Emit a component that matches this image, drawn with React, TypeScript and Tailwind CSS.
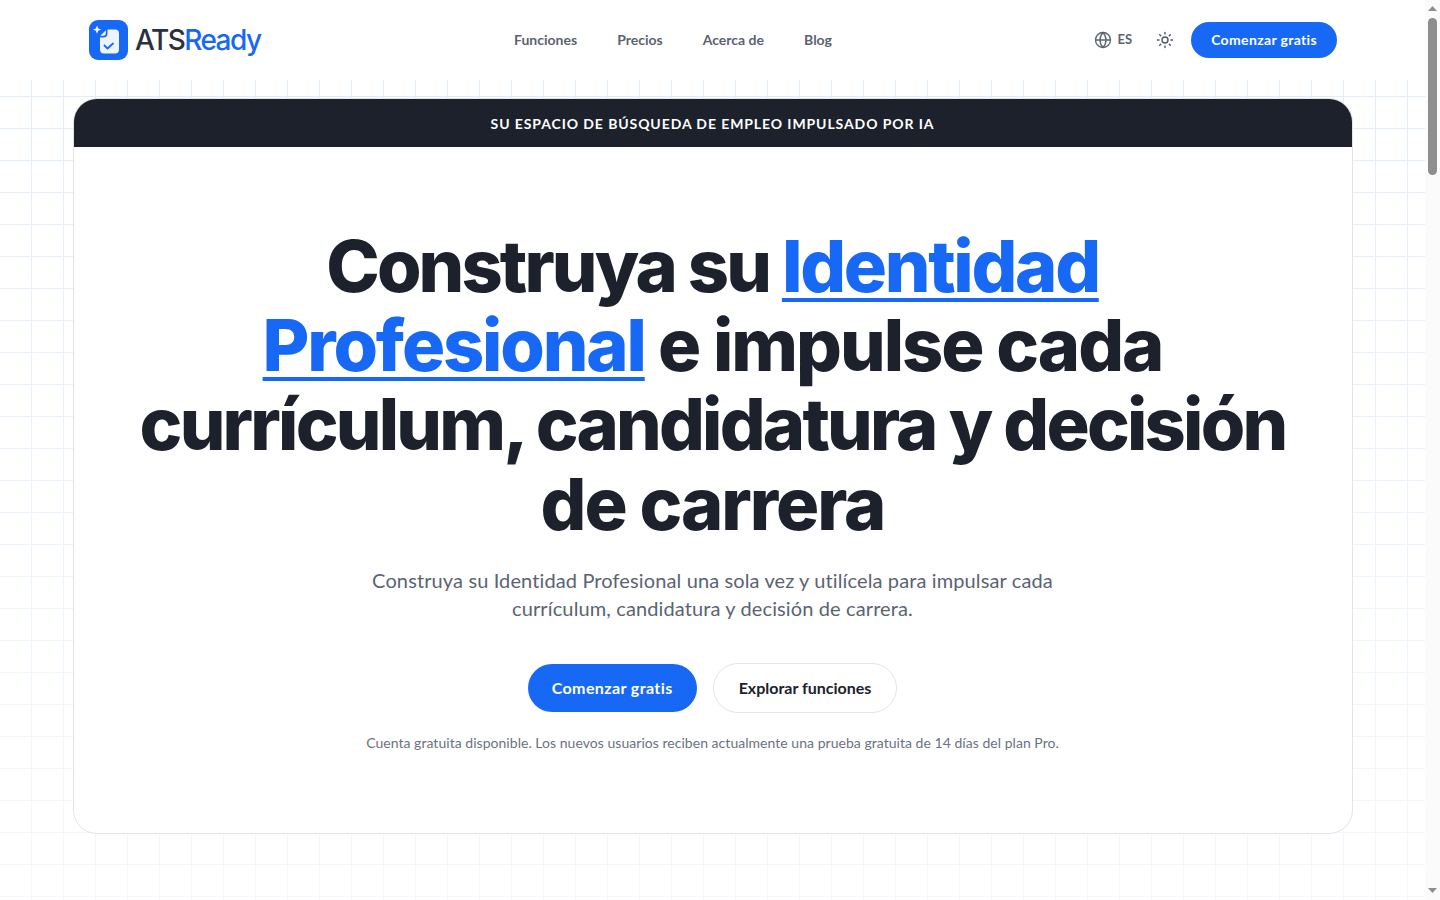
import React from "react";
import { Globe, Sun } from "lucide-react";

const body = "font-['Lato','Noto_Sans',sans-serif]";

function Logo() {
  return (
    <div className="flex items-center gap-[7px]">
      <svg width="39" height="40" viewBox="0 0 39 40" fill="none">
        <rect x="0" y="0" width="39" height="40" rx="9" fill="#1769f5" />
        <path d="M18.500 9.500h7.500a4 4 0 0 1 4 4V29.500a4 4 0 0 1-4 4H15a4 4 0 0 1-4-4V17.500h3.500a4 4 0 0 0 4-4z" fill="#eef4fe" />
        <path d="M16.800 10.200v3a2.500 2.500 0 0 1-2.500 2.500h-3z" fill="#eef4fe" />
        <path d="M8 5.500l1.100 3 3 1.100-3 1.100-1.100 3-1.100-3-3-1.100 3-1.100z" fill="#fff" />
        <path d="M15.500 25.500l3 3 5.500-5" stroke="#1769f5" strokeWidth="1.800" strokeLinecap="round" strokeLinejoin="round" />
      </svg>
      <span className="font-['Inter',sans-serif] text-[28px] font-medium tracking-[-0.055em] leading-none">
        <span className="text-[#2a313c]">ATS</span>
        <span className="text-[#1769f5]">Ready</span>
      </span>
    </div>
  );
}

function Scrollbar() {
  return (
    <aside className="flex h-full w-[15px] shrink-0 flex-col items-center bg-[#fbfbfb] pt-[6px]">
      <svg width="9" height="5" viewBox="0 0 9 5"><path d="M4.500 0L9 5H0z" fill="#8e8e8e" /></svg>
      <div className="mt-[7px] h-[157px] w-[9px] rounded-full bg-[#8e8e8e]" />
      <svg className="mt-auto mb-[7px]" width="9" height="5" viewBox="0 0 9 5"><path d="M4.500 5L9 0H0z" fill="#8e8e8e" /></svg>
    </aside>
  );
}

export default function App() {
  return (
    <div className={`flex h-screen overflow-hidden bg-white ${body}`}>
      <div className="min-w-0 flex-1">
        <header className="h-20 bg-white">
          <div className="mx-auto flex h-20 max-w-[1280px] items-center justify-between pl-[16.5px] pr-[15.5px]">
            <Logo />
            <nav className="mr-[8px] flex items-center gap-10 pb-[2px] text-[14px] font-bold text-[#5b6372]">
              <a>Funciones</a>
              <a>Precios</a>
              <a>Acerca de</a>
              <a>Blog</a>
            </nav>
            <div className="flex items-center">
              <div className="flex items-center gap-[6px] text-[13px] font-bold text-[#5b6372]">
                <Globe size={18} strokeWidth={1.8} />
                <span>ES</span>
              </div>
              <Sun size={18} strokeWidth={1.8} className="ml-6 text-[#4b5363]" />
              <button className="ml-[17px] h-9 rounded-full bg-[#1769f5] px-5 pb-[2px] text-[14px] font-bold tracking-[0.35px] text-white">Comenzar gratis</button>
            </div>
          </div>
        </header>
        <main className="h-[820px] bg-[linear-gradient(to_bottom,transparent,rgba(255,255,255,0.6)),linear-gradient(#e3edfa_1px,transparent_1px),linear-gradient(90deg,#e3edfa_1px,transparent_1px)] bg-[size:100%_100%,32px_32px,32px_32px] bg-[position:0_0,-1px_16px,-1px_16px] pt-[18px]">
          <section className="mx-auto h-[736px] max-w-[1280px] overflow-hidden rounded-3xl border border-[#e1e4ea] bg-white">
            <div className="flex h-12 items-center justify-center bg-[#1c212b] text-[14px] font-bold tracking-[0.065em] text-white">
              SU ESPACIO DE BÚSQUEDA DE EMPLEO IMPULSADO POR IA
            </div>
            <div className="flex flex-col items-center px-12 pt-[79px]">
              <h1 className="font-['Inter',sans-serif] text-center text-[72px] font-extrabold leading-[79.2px] tracking-[-0.035em] text-[#1c212b]">
                <span className="tracking-[-0.04em]">Construya su </span>
                <span className="text-[#1769f5] underline decoration-4 underline-offset-[6px]">
                  <span className="tracking-[-0.032em]">Identidad</span>
                  <br />
                  <span className="tracking-[-0.03em]">Profesional</span>
                </span>{" "}
                <span className="tracking-[-0.028em]">e impulse cada</span>
                <br />
                <span className="tracking-[-0.0387em]">currículum, candidatura y decisión</span>
                <br />
                <span className="tracking-[-0.028em]">de carrera</span>
              </h1>
              <p className="mt-[23px] max-w-[720px] text-center text-[20px] leading-7 tracking-[0.12px] text-[#5b6372]">
                Construya su Identidad Profesional una sola vez y utilícela para impulsar cada currículum, candidatura y decisión de carrera.
              </p>
              <div className="mt-[41px] flex items-center gap-4">
                <button className="h-12 rounded-full bg-[#1769f5] px-6 text-[16px] font-bold tracking-[0.4px] text-white">Comenzar gratis</button>
                <button className="h-[50px] rounded-full border border-[#e1e4ea] bg-white px-[25px] text-[16px] font-bold text-[#1c212b]">Explorar funciones</button>
              </div>
              <p className="mt-[19px] text-[14px] tracking-[0.035px] text-[#6b7280]">
                Cuenta gratuita disponible. Los nuevos usuarios reciben actualmente una prueba gratuita de 14 días del plan Pro.
              </p>
            </div>
          </section>
        </main>
      </div>
      <Scrollbar />
    </div>
  );
}
